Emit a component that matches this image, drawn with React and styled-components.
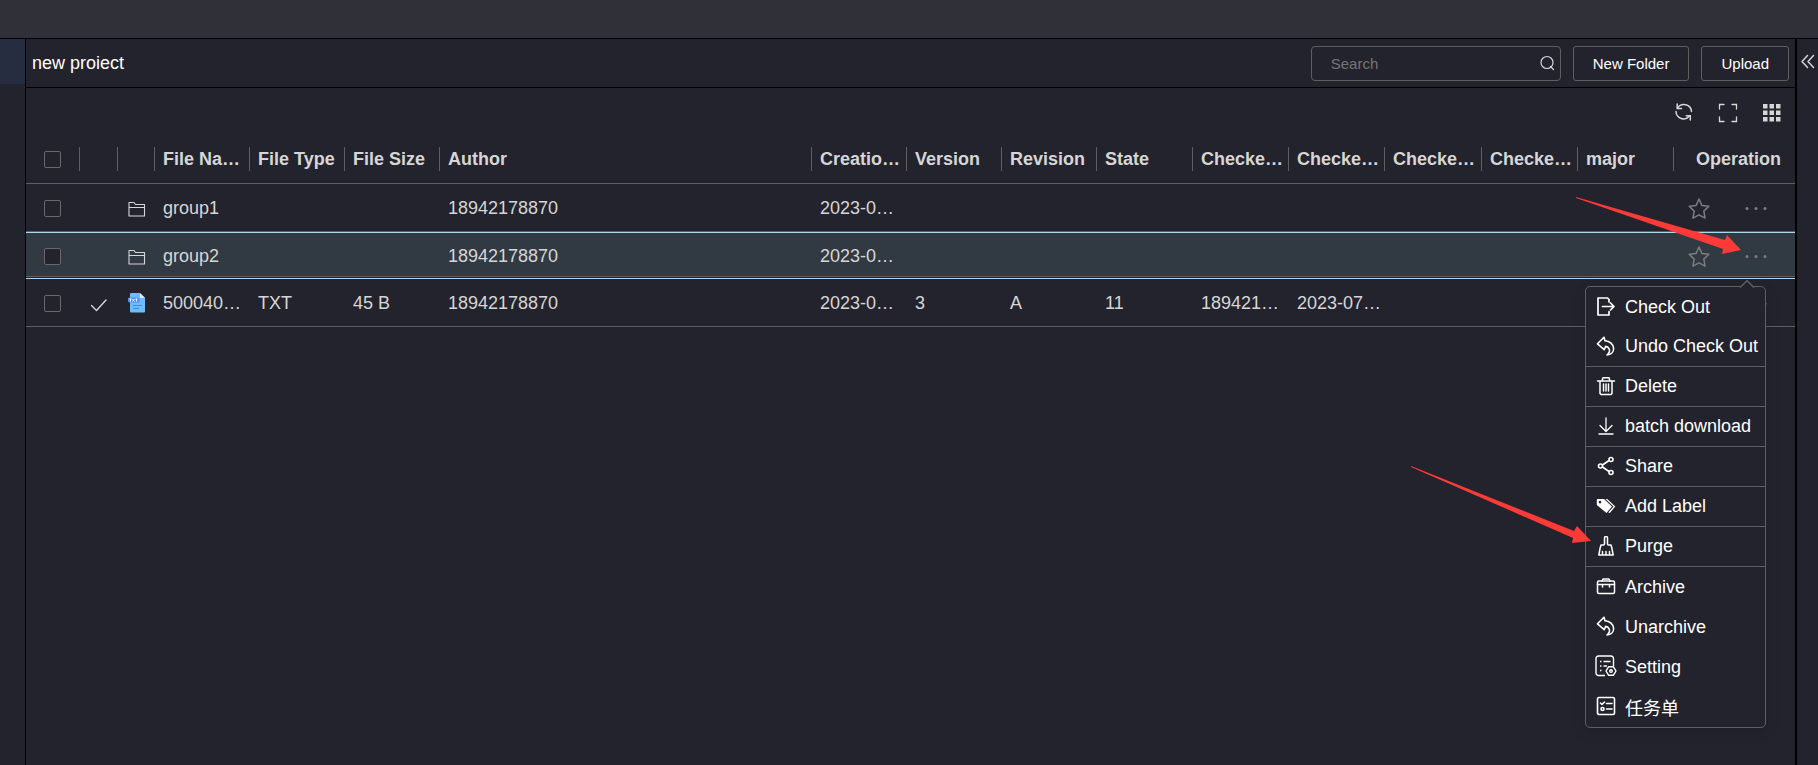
import React, { useState } from "react";
import styled, { createGlobalStyle } from "styled-components";

const GlobalStyle = createGlobalStyle`
  * {
    box-sizing: border-box;
  }

  body {
    margin: 0;
    background: #23232d;
    color: #d6d6d6;
    font-family: "Liberation Sans", Arial, "Noto Sans CJK SC", sans-serif;
    font-size: 18px;
  }

  button,
  input {
    font-family: inherit;
    color: inherit;
  }

  svg {
    display: block;
    flex-shrink: 0;
  }
`;

const Page = styled.div`
  position: relative;
  min-height: 100vh;
  display: flex;
  flex-direction: column;
`;

const TopBar = styled.header`
  height: 39px;
  background: #303039;
  border-bottom: 1px solid #000000;
`;

const Body = styled.div`
  flex: 1;
  display: flex;
`;

const Rail = styled.nav`
  width: 26px;
  border-right: 1px solid #000000;
`;

const RailItem = styled.div`
  height: 45px;
  background: #262d40;
`;

const Main = styled.main`
  flex: 1;
  min-width: 0;
`;

const SidePanel = styled.aside`
  width: 23px;
  border-left: 2px solid #000000;
  padding-top: 14px;
`;

const ProjectBar = styled.div`
  height: 49px;
  padding: 0 6px;
  border-bottom: 1px solid #000000;
  display: flex;
  align-items: center;
  gap: 12px;
`;

const Title = styled.h1`
  flex: 1;
  margin: 0;
  font-size: 18px;
  font-weight: normal;
  color: #ffffff;
`;

const SearchBox = styled.label`
  width: 250px;
  height: 35px;
  padding: 0 5px 0 19px;
  border: 1px solid #5f5f5f;
  border-radius: 4px;
  display: flex;
  align-items: center;
`;

const SearchInput = styled.input`
  flex: 1;
  min-width: 0;
  padding: 0;
  border: none;
  outline: none;
  background: none;
  font-size: 15px;

  &::placeholder {
    color: #757575;
    opacity: 1;
  }
`;

const Button = styled.button`
  height: 35px;
  padding: 0 19px;
  border: 1px solid #5f5f5f;
  border-radius: 3px;
  background: none;
  color: #ffffff;
  font-size: 15px;
  cursor: pointer;
`;

const IconButton = styled.button`
  padding: 0;
  border: none;
  background: none;
  color: ${(props) => props.$color || "#d6d6d6"};
  display: flex;
  cursor: pointer;
`;

const Tools = styled.div`
  height: 47px;
  padding: 3px 13px 0 0;
  display: flex;
  align-items: center;
  justify-content: flex-end;
  gap: 24px;
`;

const Table = styled.table`
  width: 100%;
  table-layout: fixed;
  border-spacing: 0;
`;

const HeadCell = styled.th`
  height: 49px;
  padding: 0 0 0 8px;
  border-bottom: 1px solid #5f5f5f;
  background: ${(props) =>
    props.$last
      ? "none"
      : "linear-gradient(#5f5f5f, #5f5f5f) right center / 1px 24px no-repeat"};
  text-align: ${(props) => (props.$last ? "center" : "left")};
  white-space: nowrap;
  overflow: hidden;
  text-overflow: ellipsis;
`;

const CheckHead = styled(HeadCell)`
  padding: 0 0 0 18px;
`;

const Cell = styled.td`
  height: 48px;
  padding: 2px 0 0 8px;
  border-bottom: 1px solid #5f5f5f;
  white-space: nowrap;
  overflow: hidden;
  text-overflow: ellipsis;
`;

const CheckCell = styled(Cell)`
  padding: 2px 0 0 18px;
`;

const IconCell = styled(Cell)`
  padding: 2px 0 0 10px;
`;

const OperationCell = styled(Cell)`
  position: relative;
  padding: 2px 0 0;
  overflow: visible;
`;

const Row = styled.tr`
  background: ${(props) => (props.$active ? "#313942" : "none")};

  ${Cell} {
    ${(props) =>
      props.$active &&
      `
      height: 47px;
      border-top: 1px solid #a9d6f5;
      border-bottom: 1px solid #a9d6f5;
      box-shadow: inset 0 -1px 0 #23232d, inset 0 -2px 0 #5f5f5f;
    `}
  }
`;

const Checkbox = styled.input`
  appearance: none;
  display: block;
  width: 17px;
  height: 17px;
  margin: 0;
  border: 1px solid #686868;
  border-radius: 2px;
  background: #23232d;
  cursor: pointer;

  &:checked {
    background: #a9d6f5;
  }
`;

const Operations = styled.div`
  display: flex;
  align-items: center;
  justify-content: center;
  gap: 34px;
  padding: 1px 28px 0 13px;
`;

const Menu = styled.div`
  position: absolute;
  top: 53px;
  right: 29px;
  z-index: 1;
  width: 181px;
  border: 1px solid #5f5f5f;
  border-radius: 5px;
  background: #23232d;
  box-shadow: 0 4px 14px rgba(0, 0, 0, 0.12);
`;

const MenuPointer = styled.svg`
  position: absolute;
  top: -7px;
  right: 10px;
`;

const MenuItem = styled.button`
  width: 100%;
  height: 40px;
  padding: 0 0 0 10px;
  border: none;
  border-bottom: ${(props) => (props.$divided ? "1px solid #5f5f5f" : "none")};
  background: none;
  color: #ffffff;
  font-size: 18px;
  display: flex;
  align-items: center;
  gap: 9px;
  white-space: nowrap;
  cursor: pointer;
`;

const IconSlot = styled.span`
  width: 20px;
  padding-bottom: 2px;
  display: flex;
  justify-content: center;
`;

const Pointer = styled.svg`
  position: absolute;
  top: ${(props) => props.$top}px;
  right: ${(props) => props.$right}px;
  z-index: 2;
  fill: #fc3a38;
  pointer-events: none;
`;

const Line = ({ size = 20, width = 1.5, children }) => (
  <svg
    width={size}
    height={size}
    viewBox={`0 0 ${size} ${size}`}
    fill="none"
    stroke="currentColor"
    strokeWidth={width}
    strokeLinejoin="round"
    strokeLinecap="round"
    aria-hidden="true"
  >
    {children}
  </svg>
);

const searchIcon = (
  <Line size={16} width={1.2}>
    <circle cx="8" cy="7.5" r="6" />
    <path d="M11.5 11.5l3 3" />
  </Line>
);

const refreshIcon = (
  <Line width={1.5}>
    <path d="M3.5 5A7.600 7.600 0 0 1 17.500 8.500" />
    <path d="M2 8.500A7.600 7.600 0 0 0 15.500 13" />
    <path d="M3.200 1v4.500h4.300M16.300 17v-4.300h-4" strokeLinejoin="miter" />
  </Line>
);

const fullIcon = (
  <Line width={1.3}>
    <path
      d="M1.5 6v-4.5h4.5M14 1.5h4.5v4.500M18.5 14v4.500h-4.500M6 18.500h-4.500v-4.500"
      strokeLinejoin="miter"
    />
  </Line>
);

const gridIcon = (
  <svg width="20" height="20" viewBox="0 0 20 20" fill="currentColor" aria-hidden="true">
    {[1, 7.5, 14].map((y) =>
      [1, 7.5, 14].map((x) => (
        <rect key={`${x}-${y}`} x={x} y={y} width="4.5" height="4.5" />
      ))
    )}
  </svg>
);

const collapseIcon = (
  <Line size={18} width={1.5}>
    <path d="M10.500 2.500L5 8.500l5.500 6M16.500 2.500L11 8.500l5.500 6" />
  </Line>
);

const folderIcon = (
  <Line size={18} width={1.1}>
    <path d="M1 16v-13.500h5l1.500 2h9v11.500zM1 7.500h15.500" />
  </Line>
);

const fileIcon = (
  <svg width="18" height="22" viewBox="0 0 18 22" aria-hidden="true">
    <path d="M3 0h9l5 5v13.500a1 1 0 0 1-1 1H3a1 1 0 0 1-1-1V1a1 1 0 0 1 1-1z" fill="#6fbcfb" />
    <path d="M12 0l5 5h-4a1 1 0 0 1-1-1z" fill="#d9effe" />
    <rect x="0" y="4.500" width="11.500" height="5" rx="1.500" fill="#4a94ee" />
    <path
      d="M1.500 6h2M2.500 6v2.500M4.500 6l2 2.500M6.500 6l-2 2.500M7.500 6h2M8.500 6v2.500"
      stroke="#ffffff"
      strokeWidth="0.900"
    />
    <path d="M5 12.500h9M5 15.500h6" stroke="#3b8bea" />
  </svg>
);

const checkIcon = (
  <Line size={18} width={1.4}>
    <path d="M1.500 10.500l5 5L16 5" />
  </Line>
);

const starIcon = (
  <Line size={24} width={1.5}>
    <path d="M12 2l2.900 6.400 6.900.900-5 4.800 1.300 7-6.100-3.300-6.100 3.300 1.300-7-5-4.800 6.900-.900z" />
  </Line>
);

const moreIcon = (
  <svg width="22" height="22" viewBox="0 0 22 22" fill="currentColor" aria-hidden="true">
    <circle cx="2" cy="10.500" r="1.500" />
    <circle cx="11" cy="10.500" r="1.500" />
    <circle cx="20" cy="10.500" r="1.500" />
  </svg>
);

const exitIcon = (
  <Line width={1.7}>
    <path d="M13 6V3.500L11.500 2H2v17H13v-3.500M6.500 10.500h11.500M14.500 7l3.500 3.500-3.500 3.500" />
  </Line>
);

const undoIcon = (
  <Line width={1.6}>
    <path d="M1.500 7.800L8 1.200l1 3.500c4.800.300 8.400 3.600 8.600 7.700.200 3.500-2.600 6.200-6.600 6.600 2.200-1.800 3-4 2.200-6-.600-1.500-1.900-2.400-3.500-2.600l-1.500 3.300z" />
  </Line>
);

const deleteIcon = (
  <Line width={1.5}>
    <path d="M1.500 5h17M6 5l1-3.200h6l1 3.200M4 5v12.500l1 1h10l1-1V5M7.500 8v7M10 8v7M12.500 8v7" />
  </Line>
);

const downloadIcon = (
  <Line width={1.3}>
    <path d="M10 2v13M4 9.500l6 6 6-6M3 18h14" />
  </Line>
);

const shareIcon = (
  <Line width={1.6}>
    <circle cx="15" cy="3.500" r="2" />
    <circle cx="4.500" cy="10" r="2" />
    <circle cx="15" cy="16.500" r="2" />
    <path d="M6.500 9l6.500-4.500M6.500 11l6.500 4.500" />
  </Line>
);

const labelIcon = (
  <svg width="20" height="20" viewBox="0 0 20 20" fill="currentColor" aria-hidden="true">
    <path
      fillRule="evenodd"
      d="M1.500 3H8l8 7.500-5.500 6.500L.8 9V3.700zM4 4.800a1.300 1.300 0 1 0 0 2.600 1.300 1.300 0 0 0 0-2.600z"
    />
    <path d="M9.500 3h1.800l8 7.500-5.500 6.500-1.500-.6 5.200-5.900z" />
  </svg>
);

const purgeIcon = (
  <Line width={1.5}>
    <path d="M8.500 8V2a1.500 1.500 0 0 1 3 0v6c0 .8.500 1 1.200 1H15l1 3.500v.500l1.200 6H2.800L4 13v-.500L5 9h2.300c.700 0 1.200-.200 1.200-1zM6.500 15.500V19M10 15.500V19M13.500 15.500V19" />
  </Line>
);

const archiveIcon = (
  <Line width={1.5}>
    <rect x="1.500" y="5" width="17" height="12.500" rx="1.500" />
    <path d="M6 5l1-2h6l1 2M1.500 8.500h17M6.500 8.500v2.500M13.500 8.500v2.500" />
  </Line>
);

const settingIcon = (
  <svg
    width="22"
    height="22"
    viewBox="0 0 22 22"
    fill="none"
    stroke="currentColor"
    strokeWidth="1.400"
    aria-hidden="true"
  >
    <path d="M10 20.500H3.500a2.500 2.500 0 0 1-2.500-2.500V3.500A2.500 2.500 0 0 1 3.500 1h12.500A2.500 2.500 0 0 1 18.500 3.500v7.500" />
    <path d="M5 6.500h1.500M8.500 6.500h7M5 11h1.500M8.500 11h3.500M5 15.500h1.500" />
    <path d="M13.500 11.800h5l2.500 4.200-2.500 4.200h-5L11 16z" strokeLinejoin="round" />
    <circle cx="16" cy="16" r="1.300" />
  </svg>
);

const taskIcon = (
  <Line width={1.6}>
    <rect x="1.500" y="1.500" width="17" height="17" rx="1.500" />
    <path d="M4.500 7l1.500 1.500L8.500 6M10.500 7.500H16M10.500 13H16" />
    <circle cx="6.500" cy="13" r="1.500" />
  </Line>
);

const columns = [
  { width: 38 },
  { width: 37 },
  { label: "File Na…", key: "name", width: 95 },
  { label: "File Type", key: "type", width: 95 },
  { label: "File Size", key: "size", width: 95 },
  { label: "Author", key: "author" },
  { label: "Creatio…", key: "created", width: 95 },
  { label: "Version", key: "version", width: 95 },
  { label: "Revision", key: "revision", width: 95 },
  { label: "State", key: "state", width: 96 },
  { label: "Checke…", key: "outBy", width: 96 },
  { label: "Checke…", key: "outTime", width: 96 },
  { label: "Checke…", key: "inBy", width: 97 },
  { label: "Checke…", key: "inTime", width: 96 },
  { label: "major", key: "major", width: 96 },
];

const files = [
  { name: "group1", author: "18942178870", created: "2023-0…", folder: true },
  { name: "group2", author: "18942178870", created: "2023-0…", folder: true },
  {
    name: "500040…",
    type: "TXT",
    size: "45 B",
    author: "18942178870",
    created: "2023-0…",
    version: "3",
    revision: "A",
    state: "11",
    outBy: "189421…",
    outTime: "2023-07…",
  },
];

const menuItems = [
  { label: "Check Out", icon: exitIcon },
  { label: "Undo Check Out", icon: undoIcon, divided: true },
  { label: "Delete", icon: deleteIcon, divided: true },
  { label: "batch download", icon: downloadIcon, divided: true },
  { label: "Share", icon: shareIcon, divided: true },
  { label: "Add Label", icon: labelIcon, divided: true },
  { label: "Purge", icon: purgeIcon, divided: true },
  { label: "Archive", icon: archiveIcon },
  { label: "Unarchive", icon: undoIcon },
  { label: "Setting", icon: settingIcon },
  { label: "任务单", icon: taskIcon },
];

function OperationMenu() {
  return (
    <Menu>
      <MenuPointer width="16" height="8" viewBox="0 0 16 8">
        <path d="M1 7.500L8 .7l7 6.800V8H1z" fill="#23232d" />
        <path d="M1 7.500L8 .7l7 6.800" fill="none" stroke="#5f5f5f" strokeWidth="1.500" />
      </MenuPointer>
      {menuItems.map((item) => (
        <MenuItem key={item.label} type="button" $divided={item.divided}>
          <IconSlot>{item.icon}</IconSlot>
          {item.label}
        </MenuItem>
      ))}
    </Menu>
  );
}

function App() {
  const [open, setOpen] = useState("group2");

  const toggleMenu = (name) => {
    setOpen(open === name ? "" : name);
  };

  return (
    <Page>
      <GlobalStyle />
      <TopBar />
      <Body>
        <Rail>
          <RailItem />
        </Rail>
        <Main>
          <ProjectBar>
            <Title>new proiect</Title>
            <SearchBox>
              <SearchInput type="text" placeholder="Search" aria-label="Search" />
              {searchIcon}
            </SearchBox>
            <Button type="button">New Folder</Button>
            <Button type="button">Upload</Button>
          </ProjectBar>
          <Tools>
            <IconButton type="button" aria-label="Refresh">
              {refreshIcon}
            </IconButton>
            <IconButton type="button" aria-label="Full screen">
              {fullIcon}
            </IconButton>
            <IconButton type="button" aria-label="Grid view">
              {gridIcon}
            </IconButton>
          </Tools>
          <Table>
            <colgroup>
              <col width="54" />
              {columns.map((column, index) => (
                <col key={index} width={column.width} />
              ))}
              <col width="121" />
            </colgroup>
            <thead>
              <tr>
                <CheckHead>
                  <Checkbox type="checkbox" aria-label="Select all" />
                </CheckHead>
                {columns.map((column, index) => (
                  <HeadCell key={index}>{column.label}</HeadCell>
                ))}
                <HeadCell $last>Operation</HeadCell>
              </tr>
            </thead>
            <tbody>
              {files.map((file) => (
                <Row key={file.name} $active={file.name === open}>
                  <CheckCell>
                    <Checkbox type="checkbox" aria-label={file.name} />
                  </CheckCell>
                  <IconCell>{!file.folder && checkIcon}</IconCell>
                  <IconCell>{file.folder ? folderIcon : fileIcon}</IconCell>
                  {columns.slice(2).map((column) => (
                    <Cell key={column.key}>{file[column.key]}</Cell>
                  ))}
                  <OperationCell>
                    <Operations>
                      <IconButton type="button" $color="#7d7d80" aria-label="Favorite">
                        {starIcon}
                      </IconButton>
                      <IconButton
                        type="button"
                        $color="#7d7d80"
                        aria-label="More"
                        onClick={() => toggleMenu(file.name)}
                      >
                        {moreIcon}
                      </IconButton>
                    </Operations>
                    {file.name === open && <OperationMenu />}
                  </OperationCell>
                </Row>
              ))}
            </tbody>
          </Table>
        </Main>
        <SidePanel>
          <IconButton type="button" aria-label="Expand panel">
            {collapseIcon}
          </IconButton>
        </SidePanel>
      </Body>
      <Pointer $top={196} $right={76} width="166" height="60" viewBox="0 0 166 60">
        <path d="M0 1l149 43 2-5 14 15-19 4 1-5L0 2z" />
      </Pointer>
      <Pointer $top={465} $right={226} width="182" height="79" viewBox="0 0 182 79">
        <path d="M1 1l163 65 3-5 14 15-19 2 1-5L1 2z" />
      </Pointer>
    </Page>
  );
}

export default App;
